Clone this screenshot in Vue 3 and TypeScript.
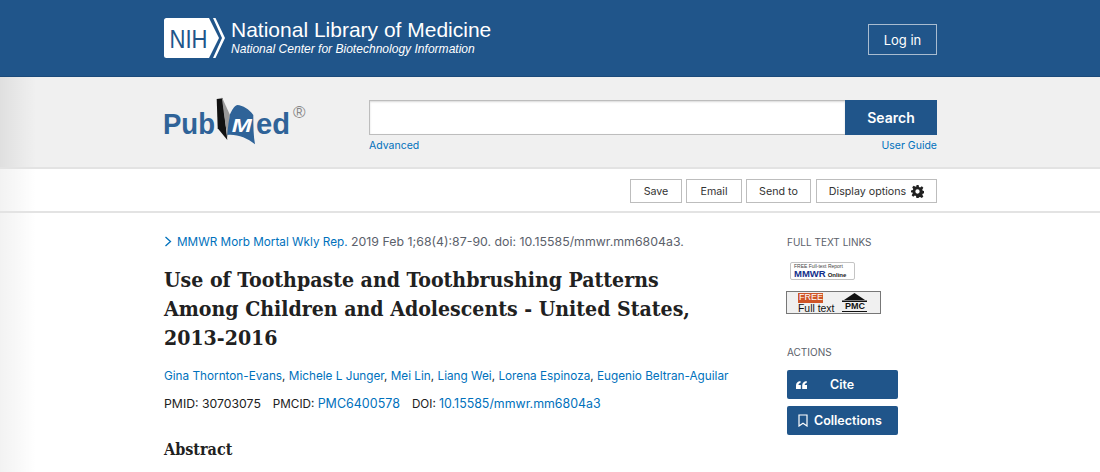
<template>
  <div class="page">
    <header class="ncbi">
      <div class="wrap ncbi-row">
        <a class="nih">
          <svg class="nih-badge" width="61" height="40" viewBox="0 0 61 40">
            <path d="M2.500 0H45L55 20L45 40H2.500A2.500 2.500 0 0 1 0 37.500V2.500A2.500 2.500 0 0 1 2.500 0Z" fill="#fff" />
            <path d="M49 0H51.500L61 20L51.500 40H49L58 20Z" fill="#fff" />
            <text x="5.500" y="30" class="nih-text" textLength="38" lengthAdjust="spacingAndGlyphs">NIH</text>
          </svg>
          <span class="nlm">
            <span class="nlm-title">National Library of Medicine</span>
            <span class="nlm-sub">National Center for Biotechnology Information</span>
          </span>
        </a>
        <button class="login">Log in</button>
      </div>
    </header>

    <section class="search-band">
      <div class="wrap search-row">
        <svg class="logo" width="145" height="50" viewBox="0 0 145 50">
          <text x="0" y="38" class="logo-word" textLength="52" lengthAdjust="spacingAndGlyphs">Pub</text>
          <path d="M53.700 3L59.700 2.300L64.300 44L54.700 32.300Z" fill="#111" />
          <path d="M58.700 .7L67 19L64.700 42.300L61.500 22Z" fill="#999" />
          <path d="M64.300 39C65 30 66 24 67 18.300C69 14 71 10 74.300 9C80 9.500 86 13 90.300 19C90.300 30 90.500 40 92 48.300C84 42 74 38 64.300 39Z" fill="#2f6398" />
          <text x="68.700" y="35.700" class="logo-m" textLength="20" lengthAdjust="spacingAndGlyphs">M</text>
          <text x="93" y="38" class="logo-word" textLength="34" lengthAdjust="spacingAndGlyphs">ed</text>
          <text x="130" y="22" class="logo-reg">®</text>
        </svg>
        <div class="search-col">
          <div class="search-box">
            <input class="search-input" type="text" />
            <button class="search-btn">Search</button>
          </div>
          <div class="search-links">
            <a>Advanced</a>
            <a>User Guide</a>
          </div>
        </div>
      </div>
    </section>

    <nav class="toolbar">
      <div class="wrap tools">
        <button v-for="t in tools" :key="t.label" class="tool" :style="{ width: t.width + 'px' }">{{ t.label }}</button>
        <button class="tool display">
          Display options
          <svg class="gear" width="13" height="13" viewBox="0 0 24 24">
            <path fill="#212121" fill-rule="evenodd" d="M10 0h4l.8 3.600 2 .8 3.200-2 2.800 2.800-2 3.200.8 2 3.400.8v4l-3.400.8-.8 2 2 3.200-2.800 2.800-3.200-2-2 .8L14 24h-4l-.8-3.600-2-.8-3.200 2-2.800-2.800 2-3.200-.8-2L0 14v-4l3.400-.8.8-2-2-3.200L5 1.200l3.200 2 2-.8zM12 8a4 4 0 1 0 0 8 4 4 0 0 0 0-8z" />
          </svg>
        </button>
      </div>
    </nav>

    <div class="body-bg">
      <main class="wrap content">
        <article class="article">
          <div class="cite">
            <svg width="9" height="11" viewBox="0 0 9 11" class="chev">
              <path d="M1.500 1L6.500 5.500L1.500 10" fill="none" stroke="#0071bc" stroke-width="1.300" />
            </svg>
            <a>MMWR Morb Mortal Wkly Rep.</a> 2019 Feb 1;68(4):87-90. doi: 10.15585/mmwr.mm6804a3.
          </div>
          <h1 class="title">Use of Toothpaste and Toothbrushing Patterns Among Children and Adolescents - United States, 2013-2016</h1>
          <div class="authors">
            <template v-for="(a, i) in authors" :key="a">
              <a>{{ a }}</a><span v-if="i < authors.length - 1">, </span>
            </template>
          </div>
          <div class="ids">
            <span>PMID: 30703075</span>
            <span class="id-label">PMCID: <a class="pmcid">PMC6400578</a></span>
            <span class="id-label">DOI: <a class="doi">10.15585/mmwr.mm6804a3</a></span>
          </div>
          <h2 class="abstract">Abstract</h2>
        </article>

        <aside class="side">
          <h3 class="side-title">FULL TEXT LINKS</h3>
          <div class="mmwr">
            <span class="mmwr-top">FREE Full-text Report</span>
            <span class="mmwr-row"><b class="mmwr-big">MMWR</b><b class="mmwr-on">Online</b></span>
          </div>
          <div class="pmc">
            <span class="pmc-left">
              <span class="pmc-free">FREE</span>
              <span class="pmc-full">Full text</span>
            </span>
            <span class="pmc-right">
              <svg width="25" height="9" viewBox="0 0 25 9"><path d="M12.500 0L23 7H2Z" fill="#111" /><rect y="7.500" width="25" height="1.500" fill="#111" /></svg>
              <span class="pmc-name">PMC</span>
            </span>
          </div>
          <h3 class="side-title actions">ACTIONS</h3>
          <button class="action cite-btn">
            <svg width="11" height="8" viewBox="0 0 11 8">
              <path d="M0 8V4.500C0 2 1.500 .5 4.500 0V2C3 2.300 2.500 3 2.500 4H4.800V8ZM6.200 8V4.500C6.200 2 7.700 .5 10.700 0V2C9.200 2.300 8.700 3 8.700 4H11V8Z" fill="#fff" />
            </svg>
            <span class="cite-label">Cite</span>
          </button>
          <button class="action coll">
            <svg width="10" height="13" viewBox="0 0 10 13">
              <path d="M1 1H9V12L5 9.300L1 12Z" fill="none" stroke="#fff" stroke-width="1.200" />
            </svg>
            Collections
          </button>
        </aside>
      </main>
    </div>
  </div>
</template>

<script setup lang="ts">
const tools: { label: string; width: number }[] = [
  { label: 'Save', width: 52 },
  { label: 'Email', width: 56 },
  { label: 'Send to', width: 65 },
]
const authors: string[] = [
  'Gina Thornton-Evans',
  'Michele L Junger',
  'Mei Lin',
  'Liang Wei',
  'Lorena Espinoza',
  'Eugenio Beltran-Aguilar',
]
</script>

<style>
body {
  background: #fff;
}
</style>

<style scoped>
.page {
  height: 472px;
  overflow: hidden;
  font-family: Inter, "Liberation Sans", sans-serif;
  color: #212121;
  font-size: 12px;
}

a {
  color: #0071bc;
  text-decoration: none;
}

button {
  font-family: inherit;
  cursor: pointer;
}

.wrap {
  width: 773px;
  margin-left: 164px;
}

.ncbi {
  height: 77px;
  box-sizing: border-box;
  background: #20558a;
  border-bottom: 1px solid #1b4a7a;
}

.ncbi-row {
  height: 76px;
  display: flex;
  align-items: center;
  justify-content: space-between;
}

.nih {
  display: flex;
  align-items: center;
  gap: 6px;
}

.nih-badge {
  flex: none;
}

.nih-text {
  font-family: "Liberation Sans", sans-serif;
  font-size: 25px;
  fill: #20558a;
}

.nlm {
  display: flex;
  flex-direction: column;
  color: #fff;
  font-family: "Liberation Sans", sans-serif;
  margin-top: -2px;
}

.nlm-title {
  font-size: 21px;
  line-height: 24px;
}

.nlm-sub {
  font-size: 12.050px;
  font-style: italic;
  line-height: 14px;
}

.login {
  width: 69px;
  height: 31px;
  margin-top: 3px;
  background: transparent;
  border: 1px solid #a9bcd0;
  color: #fff;
  font-size: 13px;
}

.search-band {
  height: 92px;
  box-sizing: border-box;
  background: linear-gradient(to right, rgba(0, 0, 0, 0.07), rgba(0, 0, 0, 0) 36px), #f0f0f0;
  border-bottom: 2px solid #e3e3e3;
}

.search-row {
  display: flex;
  justify-content: space-between;
  padding-top: 23px;
}

.logo {
  flex: none;
  margin: -4px 0 0 -1px;
}

.logo-word {
  font-family: "Liberation Sans", sans-serif;
  font-size: 29px;
  font-weight: 700;
  fill: #2f6398;
}

.logo-m {
  font-family: "Liberation Sans", sans-serif;
  font-size: 18px;
  font-weight: 700;
  font-style: italic;
  fill: #fff;
}

.logo-reg {
  font-family: "Liberation Sans", sans-serif;
  font-size: 17px;
  fill: #888;
}

.search-col {
  width: 568px;
}

.search-box {
  display: flex;
  height: 35px;
}

.search-input {
  flex: 1;
  min-width: 0;
  box-sizing: border-box;
  background: #fff;
  border: 1px solid #bdbdbd;
  border-right: 0;
  box-shadow: inset 0 1px 2px rgba(0, 0, 0, 0.15);
}

.search-btn {
  width: 92px;
  background: #20558a;
  border: 0;
  color: #fff;
  font-size: 14px;
  font-weight: 600;
}

.search-links {
  display: flex;
  justify-content: space-between;
  font-size: 10.500px;
  line-height: 14px;
  margin-top: 4px;
}

.toolbar {
  height: 44px;
  box-sizing: border-box;
  background: linear-gradient(to right, rgba(0, 0, 0, 0.05), rgba(0, 0, 0, 0) 36px), #fff;
  border-bottom: 2px solid #e3e3e3;
}

.tools {
  display: flex;
  justify-content: flex-end;
  gap: 4px;
  padding-top: 10px;
}

.tool {
  height: 24px;
  box-sizing: border-box;
  background: #fff;
  border: 1px solid #bdbdbd;
  color: #333;
  font-size: 10.700px;
  padding: 0;
  display: flex;
  align-items: center;
  justify-content: center;
  gap: 5px;
}

.tool.display {
  width: 121px;
  margin-left: 1px;
}

.gear {
  flex: none;
}

.body-bg {
  height: 259px;
  background: linear-gradient(to right, rgba(0, 0, 0, 0.05), rgba(0, 0, 0, 0) 36px), #fff;
}

.content {
  display: flex;
  justify-content: space-between;
}

.article {
  width: 580px;
  padding-top: 21px;
}

.cite {
  font-size: 12.350px;
  line-height: 16px;
  color: #5b616b;
  white-space: nowrap;
}

.cite a {
  font-size: 11.720px;
}

.chev {
  margin-right: 4px;
  vertical-align: -1px;
}

.title {
  font-family: "DejaVu Serif", serif;
  font-stretch: condensed;
  font-size: 21.100px;
  font-weight: 700;
  line-height: 29px;
  color: #212121;
  margin: 15px 0 0;
  width: 570px;
}

.authors {
  margin-top: 16px;
  font-size: 11.750px;
  line-height: 16px;
  white-space: nowrap;
}

.ids {
  display: flex;
  gap: 12px;
  margin-top: 12px;
  font-size: 12.250px;
  line-height: 16px;
}

.id-label {
  font-size: 11.700px;
}

.pmcid {
  font-size: 12.500px;
}

.doi {
  font-size: 12.400px;
}

.abstract {
  font-family: "DejaVu Serif", serif;
  font-stretch: condensed;
  font-size: 16px;
  font-weight: 700;
  line-height: 22px;
  margin: 27px 0 0;
}

.side {
  width: 150px;
  padding-top: 23px;
}

.side-title {
  margin: 0;
  font-size: 10px;
  font-weight: 400;
  line-height: 12px;
  color: #5b616b;
}

.mmwr {
  display: flex;
  flex-direction: column;
  width: 65px;
  height: 18px;
  box-sizing: border-box;
  margin: 14px 0 0 3px;
  border: 1px solid #c4c4c4;
  border-radius: 2px;
  padding: 1px 3px;
  font-family: "Liberation Sans", sans-serif;
  background: #fff;
}

.mmwr-top {
  font-size: 5px;
  line-height: 5px;
  white-space: nowrap;
  color: #444;
}

.mmwr-row {
  display: flex;
  align-items: baseline;
  gap: 2px;
  line-height: 9px;
}

.mmwr-big {
  font-size: 9.500px;
  color: #12308c;
}

.mmwr-on {
  font-size: 6px;
}

.pmc {
  display: flex;
  width: 95px;
  height: 23px;
  box-sizing: border-box;
  margin: 11px 0 0 -1px;
  border: 1px solid #777;
  background: #f0f0f0;
  font-family: "Liberation Sans", sans-serif;
  padding: 1px 0 0 11px;
  gap: 8px;
}

.pmc-left {
  display: flex;
  flex-direction: column;
  align-items: flex-start;
}

.pmc-free {
  background: #cf5527;
  color: #fff;
  font-size: 9px;
  line-height: 9.500px;
  padding: 0 1px;
  width: 23px;
}

.pmc-full {
  font-size: 10.400px;
  line-height: 11px;
  color: #111;
}

.pmc-right {
  display: flex;
  flex-direction: column;
  align-items: center;
}

.pmc-name {
  font-size: 9px;
  line-height: 9px;
  font-weight: 700;
  border-bottom: 1px solid #111;
  color: #111;
  width: 25px;
  text-align: center;
}

.actions {
  margin-top: 32px;
}

.action {
  display: flex;
  align-items: center;
  width: 111px;
  height: 29px;
  box-sizing: border-box;
  background: #20558a;
  border: 0;
  border-radius: 2px;
  color: #fff;
  font-size: 12.500px;
  font-weight: 600;
  padding: 0 11px;
}

.cite-btn {
  margin: 12px 0 0;
  padding-left: 9px;
}

.coll {
  margin-top: 7px;
  gap: 6px;
}

.cite-label {
  margin-left: 23px;
}
</style>
